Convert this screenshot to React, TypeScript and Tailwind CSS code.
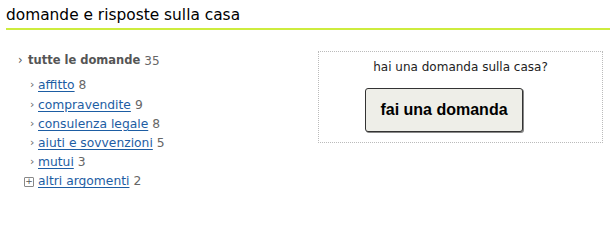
import React from "react";

const items: { label: string; count: number; plus?: boolean }[] = [
  { label: "affitto", count: 8 },
  { label: "compravendite", count: 9 },
  { label: "consulenza legale", count: 8 },
  { label: "aiuti e sovvenzioni", count: 5 },
  { label: "mutui", count: 3 },
  { label: "altri argomenti", count: 2, plus: true },
];

export default function App() {
  return (
    <div className="w-[610px] h-[214px] bg-white overflow-hidden" style={{ fontFamily: '"DejaVu Sans", Verdana, sans-serif' }}>
      <div className="ml-[6px] pt-[6px] pb-[4px] border-b-2 border-[#cdec3e]">
        <h1 className="text-[15.4px] leading-[18px] text-black font-normal">domande e risposte sulla casa</h1>
      </div>
      <div className="flex">
        <div className="w-[318px] pl-[18px] pt-[21px]">
          <div className="flex items-center h-[19px] text-[11.5px] text-[#555]">
            <span className="w-[10px] text-[#555]">›</span>
            <span className="font-bold">tutte le domande</span>
            <span className="ml-[4px] text-[12px] text-[#666]">35</span>
          </div>
          <ul className="mt-[6px] pl-[6px]">
            {items.map((it) => (
              <li key={it.label} className="flex items-center h-[19.2px] text-[12.3px]">
                {it.plus ? (
                  <span className="w-[14px] flex items-center">
                    <span className="w-[10px] h-[10px] border border-[#888] flex items-center justify-center text-[9px] leading-none text-[#555] rounded-[1px]">+</span>
                  </span>
                ) : (
                  <span className="w-[14px] pl-[6px] text-[#666] text-[11px]">›</span>
                )}
                <a href="#" className="text-[#1d5da3] underline underline-offset-2">{it.label}</a>
                <span className="ml-[4px] text-[#666]">{it.count}</span>
              </li>
            ))}
          </ul>
        </div>
        <div className="mt-[21px] w-[285px] h-[92px] border border-dotted border-[#bbb] flex flex-col">
          <p className="mt-[6px] text-center text-[12px] leading-[18px] text-[#222]">hai una domanda sulla casa?</p>
          <button
            className="mt-[12px] ml-[46px] w-[158px] h-[44px] bg-[#eeeee8] border border-[#333] rounded-[3px] shadow-[1px_1px_0_#888] text-[16px] font-bold text-black"
            style={{ fontFamily: '"Liberation Sans", Arial, sans-serif' }}
          >
            fai una domanda
          </button>
        </div>
      </div>
    </div>
  );
}
